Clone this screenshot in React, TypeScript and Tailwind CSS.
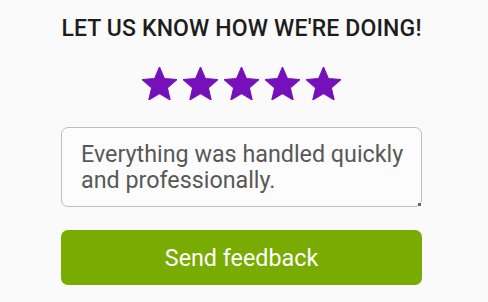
const STAR =
  "M12 17.27L18.18 21l-1.64-7.03L22 9.24l-7.19-.61L12 2 9.19 8.63 2 9.24l5.46 4.73L5.82 21z";

function Star() {
  return (
    <svg viewBox="2 2 20 19" className="w-[35px] h-[33px]" fill="#7510ba">
      <path d={STAR} strokeLinejoin="round" stroke="#7510ba" strokeWidth="0.6" />
    </svg>
  );
}

export default function App() {
  return (
    <div
      className="w-[488px] h-[302px] bg-[#fafafa] overflow-hidden"
      style={{ fontFamily: "Roboto, 'Noto Sans', sans-serif" }}
    >
      <div className="ml-[61px] w-[361px] pt-[15px] flex flex-col">
        <h1 className="text-center text-[23px] leading-[28px] font-medium tracking-[0.15px] text-[#1d1d1d] whitespace-nowrap">
          LET US KNOW HOW WE'RE DOING!
        </h1>

        <div className="mt-[24px] flex justify-center gap-[6px]">
          {[0, 1, 2, 3, 4].map((i) => (
            <Star key={i} />
          ))}
        </div>

        <div className="relative mt-[27px] h-[80px] rounded-[7px] border border-[#bdbdbd] bg-[#fcfcfc] pl-[19px] pr-[8px] pt-[13px] text-[23.3px] leading-[26px] text-[#585858]">
          Everything was handled quickly and professionally.
          <span className="absolute right-0 bottom-0 w-[3px] h-[3px] bg-[#666]" />
        </div>

        <button className="mt-[23px] h-[55px] rounded-[7px] bg-[#78ac00] text-white text-[23.3px] leading-[28px]">
          Send feedback
        </button>
      </div>
    </div>
  );
}
